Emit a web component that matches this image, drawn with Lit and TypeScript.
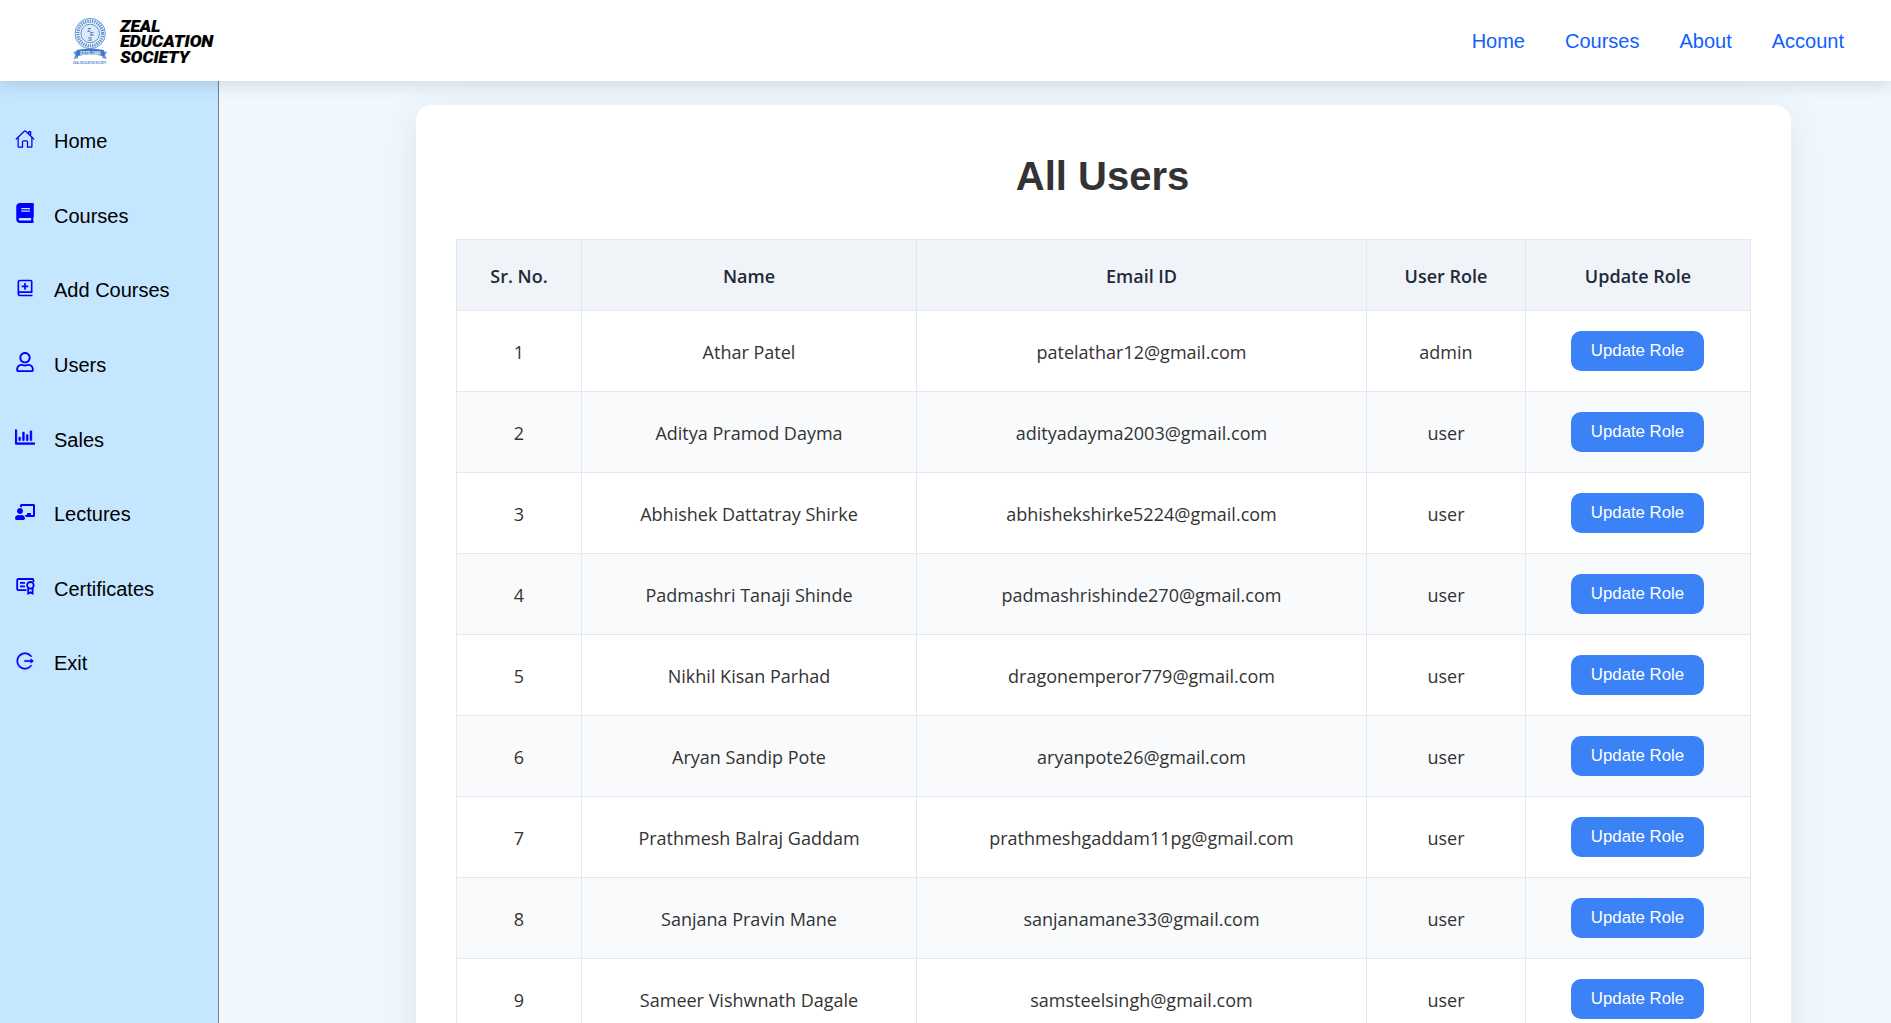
import { LitElement, html, css, svg } from "lit";
import { customElement } from "lit/decorators.js";

interface NavItem { label: string; box: string; shape: unknown; }
interface User { name: string; email: string; role: string; }

const menu: NavItem[] = [
  { label: "Home", box: "0 0 512 512", shape: svg`<g fill="none" stroke="currentColor" stroke-width="32" stroke-linecap="round" stroke-linejoin="round"><path d="M80 212v236a16 16 0 0 0 16 16h96V328a24 24 0 0 1 24-24h80a24 24 0 0 1 24 24v136h96a16 16 0 0 0 16-16V212"/><path d="M480 256L266.89 52c-5-5.28-16.69-5.34-21.78 0L32 256m368-77V64h-48v69"/></g>` },
  { label: "Courses", box: "0 0 448 512", shape: svg`<path d="M448 360V24c0-13.3-10.7-24-24-24H96C43 0 0 43 0 96v320c0 53 43 96 96 96h328c13.3 0 24-10.7 24-24v-16c0-7.5-3.5-14.3-8.9-18.7-4.2-15.4-4.2-59.3 0-74.7 5.4-4.3 8.9-11.1 8.9-18.6zM128 134c0-3.3 2.7-6 6-6h212c3.3 0 6 2.7 6 6v20c0 3.3-2.7 6-6 6H134c-3.3 0-6-2.7-6-6v-20zm0 64c0-3.3 2.7-6 6-6h212c3.3 0 6 2.7 6 6v20c0 3.3-2.7 6-6 6H134c-3.3 0-6-2.7-6-6v-20zm253.4 250H96c-17.7 0-32-14.3-32-32 0-17.6 14.4-32 32-32h285.4c-1.9 17.1-1.9 46.9 0 64z"/>` },
  { label: "Add Courses", box: "0 0 24 24", shape: svg`<path d="M13 6h-2v3H8v2h3v3h2v-3h3V9h-3z"/><path d="M19 2H6c-1.206 0-3 .799-3 3v14c0 2.201 1.794 3 3 3h15v-2H6.012C5.55 19.988 5 19.806 5 19s.55-.988 1.012-1H21V4c0-1.103-.897-2-2-2zm0 14H5V5c0-.806.55-.988 1-1h13v12z"/>` },
  { label: "Users", box: "0 0 448 512", shape: svg`<path d="M313.6 304c-28.7 0-42.5 16-89.6 16-47.1 0-60.8-16-89.6-16C60.2 304 0 364.2 0 438.4V464c0 26.5 21.5 48 48 48h352c26.5 0 48-21.5 48-48v-25.6c0-74.2-60.2-134.4-134.4-134.4zM400 464H48v-25.6c0-47.6 38.8-86.4 86.4-86.4 14.6 0 38.3 16 89.6 16 51.7 0 74.9-16 89.6-16 47.6 0 86.4 38.8 86.4 86.4V464zM224 288c79.5 0 144-64.5 144-144S303.5 0 224 0 80 64.5 80 144s64.5 144 144 144zm0-240c52.9 0 96 43.1 96 96s-43.1 96-96 96-96-43.1-96-96 43.1-96 96-96z"/>` },
  { label: "Sales", box: "0 0 512 512", shape: svg`<path stroke="currentColor" stroke-width="12" d="M396.8 352h22.4c6.4 0 12.8-6.4 12.8-12.8V108.8c0-6.4-6.4-12.8-12.8-12.8h-22.4c-6.4 0-12.8 6.4-12.8 12.8v230.4c0 6.4 6.4 12.8 12.8 12.8zm-192 0h22.4c6.4 0 12.8-6.4 12.8-12.8V140.8c0-6.4-6.4-12.8-12.8-12.8h-22.4c-6.4 0-12.8 6.4-12.8 12.8v198.4c0 6.4 6.4 12.8 12.8 12.8zm96 0h22.4c6.4 0 12.8-6.4 12.8-12.8V204.8c0-6.4-6.4-12.8-12.8-12.8h-22.4c-6.4 0-12.8 6.4-12.8 12.8v134.4c0 6.4 6.4 12.8 12.8 12.8zM496 400H48V80c0-8.84-7.16-16-16-16H16C7.16 64 0 71.16 0 80v336c0 17.67 14.33 32 32 32h464c8.84 0 16-7.16 16-16v-16c0-8.84-7.16-16-16-16zm-387.2-48h22.4c6.4 0 12.8-6.4 12.8-12.8v-70.4c0-6.4-6.4-12.8-12.8-12.8h-22.4c-6.4 0-12.8 6.4-12.8 12.8v70.4c0 6.4 6.4 12.8 12.8 12.8z"/>` },
  { label: "Lectures", box: "0 0 640 512", shape: svg`<path d="M208 352c-2.39 0-4.78.35-7.06 1.09C187.98 357.3 174.35 360 160 360c-14.35 0-27.98-2.7-40.95-6.91-2.28-.74-4.66-1.09-7.05-1.09C49.94 352-.33 402.48 0 464.62.14 490.88 21.73 512 48 512h224c26.27 0 47.86-21.12 48-47.38.33-62.14-49.94-112.62-112-112.62zm-48-32c53.02 0 96-42.98 96-96s-42.98-96-96-96-96 42.98-96 96 42.98 96 96 96zM592 0H208c-26.47 0-48 22.25-48 49.59V96c23.42 0 45.1 6.78 64 17.8V64h352v288h-64v-64H384v64h-76.24c19.1 16.69 33.12 38.73 39.69 64H592c26.47 0 48-22.25 48-49.59V49.59C640 22.25 618.47 0 592 0z"/>` },
  { label: "Certificates", box: "0 0 20 20", shape: svg`<g fill="none" stroke="currentColor" stroke-width="1.8"><path d="M11.5 14.1H3.2a1 1 0 0 1-1-1V4a1 1 0 0 1 1-1h14.200a1 1 0 0 1 1 1v2M5 6.900h5M5 10.300h5"/><circle cx="15.400" cy="9.300" r="3.300"/><path d="M13.200 12v5.600l2.200-1.200 2.200 1.200V12"/></g>` },
  { label: "Exit", box: "0 0 1024 1024", shape: svg`<path stroke="currentColor" stroke-width="12" d="M868 732h-70.3c-4.8 0-9.3 2.1-12.3 5.8-7 8.5-14.5 16.7-22.4 24.5a353.84 353.84 0 0 1-112.7 75.9A352.8 352.8 0 0 1 512.4 866c-47.9 0-94.3-9.4-137.9-27.8a353.84 353.84 0 0 1-112.7-75.9 353.28 353.28 0 0 1-76-112.5C167.3 606.2 158 559.9 158 512s9.4-94.2 27.8-137.8c17.8-42.1 43.4-80 76-112.5s70.5-58.1 112.7-75.9c43.6-18.4 90-27.8 137.9-27.8 47.9 0 94.3 9.3 137.9 27.8 42.2 17.8 80.1 43.4 112.7 75.9 7.9 7.9 15.3 16.1 22.4 24.5 3 3.7 7.6 5.8 12.3 5.8H868c6.3 0 10.2-7 6.7-12.3C798 160.5 663.8 81.6 511.3 82 271.7 82.6 79.6 277.1 82 516.4 84.4 751.9 276.2 942 512.4 942c152.1 0 285.7-78.8 362.3-197.7 3.4-5.3-.4-12.3-6.7-12.3zm88.9-226.3L815 393.7c-5.3-4.2-13-.4-13 6.3v76H488c-4.4 0-8 3.6-8 8v56c0 4.4 3.6 8 8 8h314v76c0 6.7 7.8 10.5 13 6.3l141.9-112a8 8 0 0 0 0-12.6z"/>` },
];

const users: User[] = [
  { name: "Athar Patel", email: "patelathar12@gmail.com", role: "admin" },
  { name: "Aditya Pramod Dayma", email: "adityadayma2003@gmail.com", role: "user" },
  { name: "Abhishek Dattatray Shirke", email: "abhishekshirke5224@gmail.com", role: "user" },
  { name: "Padmashri Tanaji Shinde", email: "padmashrishinde270@gmail.com", role: "user" },
  { name: "Nikhil Kisan Parhad", email: "dragonemperor779@gmail.com", role: "user" },
  { name: "Aryan Sandip Pote", email: "aryanpote26@gmail.com", role: "user" },
  { name: "Prathmesh Balraj Gaddam", email: "prathmeshgaddam11pg@gmail.com", role: "user" },
  { name: "Sanjana Pravin Mane", email: "sanjanamane33@gmail.com", role: "user" },
  { name: "Sameer Vishwnath Dagale", email: "samsteelsingh@gmail.com", role: "user" },
];

@customElement("site-logo")
export class SiteLogo extends LitElement {
  static styles = css`
    :host { display: block; width: 150px; height: 54px; }
    .logo { display: block; }
    .word { font: italic 900 16.8px Roboto, "Liberation Sans", sans-serif; fill: #000; stroke: #000; stroke-width: 0.2; }
    .tiny { font: 700 4px "Liberation Sans", sans-serif; fill: #4a83cb; }
    .mono { font: 700 6px "Liberation Sans", sans-serif; fill: #3f7ac6; }
    .year { font: 700 4.5px "Liberation Sans", sans-serif; fill: #fff; }
  `;
  render() {
    return html`<svg class="logo" width="150" height="54" viewBox="70 13.5 150 54">
      <circle cx="90.2" cy="33" r="15.2" fill="#f4f8fd" stroke="#5a8fd2" stroke-width="0.9"/>
      <circle cx="90.2" cy="33" r="12.4" fill="none" stroke="#5a8fd2" stroke-width="3.4" stroke-dasharray="1.3 1"/>
      <circle cx="90.2" cy="33" r="9.3" fill="#dfebf8" stroke="#4a83cb" stroke-width="0.9"/>
      <text class="mono" x="87.2" y="31">Z</text>
      <text class="mono" x="90" y="35.8">E</text>
      <text class="mono" x="88" y="40.6">S</text>
      <path d="M73.5 51.5l4.5-1.2v7.3l-4.5 1 1.9-3.6zM106.9 51.5l-4.5-1.2v7.3l4.5 1-1.9-3.6z" fill="#5d93d6"/>
      <path d="M76.5 49.5q13.7-3.2 27.4 0v6.200q-13.700-3.200-27.400 0z" fill="#3f7ac6"/>
      <text class="year" x="80.3" y="54" textLength="20" lengthAdjust="spacingAndGlyphs">ESTD-1996</text>
      <text class="tiny" x="73" y="63.2" textLength="33.5" lengthAdjust="spacingAndGlyphs">ZEAL EDUCATION SOCIETY</text>
      <text class="word" x="120.3" y="31" textLength="40" lengthAdjust="spacingAndGlyphs">ZEAL</text>
      <text class="word" x="120.3" y="46.7" textLength="93" lengthAdjust="spacingAndGlyphs">EDUCATION</text>
      <text class="word" x="120.3" y="62" textLength="69" lengthAdjust="spacingAndGlyphs">SOCIETY</text>
    </svg>`;
  }
}

@customElement("app-root")
export class AppRoot extends LitElement {
  static styles = css`
    :host { display: flex; flex-direction: column; height: 1023px; overflow: hidden; background: #f0f8ff; font-family: "Liberation Sans", Arial, sans-serif; }
    .header { flex: none; box-sizing: border-box; height: 81px; display: flex; align-items: center; justify-content: space-between; padding: 0 47px 0 70px; background: #fff; box-shadow: 0 4px 16px rgba(0, 0, 0, 0.12); z-index: 2; position: relative; }
    .links { display: flex; gap: 40px; padding-top: 2px; font-size: 20px; line-height: 23px; color: #1060ff; }
    .body { flex: 1; min-height: 0; display: flex; }
    .side { flex: none; box-sizing: border-box; width: 219px; border-right: 1px solid #808080; background: #c4e6ff; padding-top: 23.5px; z-index: 1; }
    .item { height: 74.57px; display: flex; align-items: center; padding-left: 15px; gap: 19px; font-size: 20px; line-height: 23px; color: #000; }
    .icon { width: 20px; height: 20px; fill: currentColor; color: #0000ff; margin-bottom: 6px; flex: none; }
    .main { flex: 1; min-width: 0; padding: 24px 100px 0 197px; }
    .card { box-sizing: border-box; padding: 40px; height: 1400px; background: #fff; border-radius: 16px; box-shadow: 0 8px 40px rgba(0, 0, 0, 0.08); }
    .title { margin: 8px 0 39px; padding-right: 2px; text-align: center; font-size: 40px; line-height: 47px; font-weight: 700; color: #333; }
    .table { border-left: 1px solid #e2e8f0; border-top: 1px solid #e2e8f0; font-family: "Open Sans", "Noto Sans", sans-serif; font-size: 18px; color: #333; }
    .row { display: grid; grid-template-columns: 125px 335px 450px 159px 225px; height: 81px; }
    .row.alt { background: #f8fafc; }
    .row.head { height: 71px; background: #f0f4f9; font-weight: 600; color: #1e293b; }
    .cell { box-sizing: border-box; display: flex; align-items: center; justify-content: center; border-right: 1px solid #e2e8f0; border-bottom: 1px solid #e2e8f0; padding-top: 1px; }
    .cell.act { padding: 0 1px 0 0; }
    .btn { box-sizing: border-box; width: 133px; height: 40px; padding: 0; border: 0; border-radius: 10px; background: #3b82f6; color: #fff; font: 16.8px "Liberation Sans", Arial, sans-serif; white-space: nowrap; }
  `;
  render() {
    return html`
      <header class="header">
        <site-logo></site-logo>
        <nav class="links">${["Home", "Courses", "About", "Account"].map((t) => html`<a>${t}</a>`)}</nav>
      </header>
      <div class="body">
        <aside class="side">
          ${menu.map((m) => html`<div class="item"><svg class="icon" viewBox=${m.box}>${m.shape}</svg><span>${m.label}</span></div>`)}
        </aside>
        <main class="main">
          <section class="card">
            <h1 class="title">All Users</h1>
            <div class="table">
              <div class="row head">
                ${["Sr. No.", "Name", "Email ID", "User Role", "Update Role"].map((t) => html`<div class="cell">${t}</div>`)}
              </div>
              ${users.map((u, i) => html`<div class="row ${i % 2 ? "alt" : ""}">
                <div class="cell">${i + 1}</div>
                <div class="cell">${u.name}</div>
                <div class="cell">${u.email}</div>
                <div class="cell">${u.role}</div>
                <div class="cell act"><button class="btn">Update Role</button></div>
              </div>`)}
            </div>
          </section>
        </main>
      </div>`;
  }
}
